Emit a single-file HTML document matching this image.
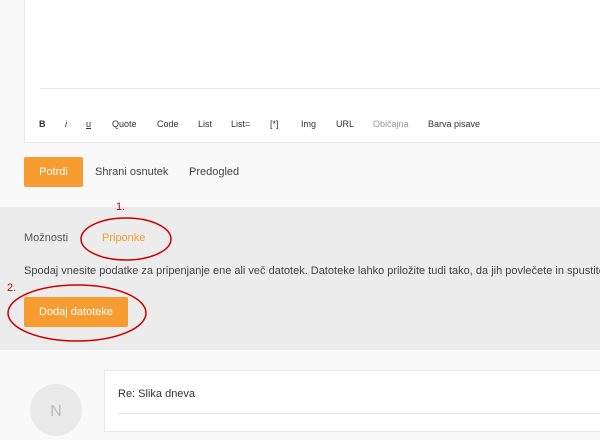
<!DOCTYPE html>
<html><head><meta charset="utf-8"><style>
body{margin:0;width:600px;height:417px;overflow:hidden;background:#f9f9f9;font-family:"Liberation Sans",sans-serif;position:relative}
.a{position:absolute}
.ed{left:24px;top:-2px;width:590px;height:145px;background:#fff;border:1px solid #e8e8e8;box-sizing:border-box}
.ta{left:40px;top:-2px;width:570px;height:90px;border-bottom:1px solid #e6e6e6}
.tb{top:119px;font-size:9px;color:#333}
.btn{background:#f79c31;color:#fff;font-size:11px;border-radius:2px;text-align:center}
.grey{left:0;top:207px;width:600px;height:143px;background:#ececec}
.card{left:104px;top:370px;width:500px;height:60px;background:#fff;border:1px solid #e8e8e8}
</style></head><body>
<div class="a ed"></div>
<div class="a ta"></div>
<div class="a tb" style="left:39px;font-weight:bold">B</div>
<div class="a tb" style="left:65px;font-style:italic">i</div>
<div class="a tb" style="left:86px;text-decoration:underline">u</div>
<div class="a tb" style="left:112px">Quote</div>
<div class="a tb" style="left:157px">Code</div>
<div class="a tb" style="left:198px">List</div>
<div class="a tb" style="left:231px">List=</div>
<div class="a tb" style="left:270px">[*]</div>
<div class="a tb" style="left:301px">Img</div>
<div class="a tb" style="left:336px">URL</div>
<div class="a tb" style="left:373px;color:#999">Običajna</div>
<div class="a tb" style="left:428px">Barva pisave</div>
<div class="a btn" style="left:24px;top:157px;width:59px;height:30px;line-height:30px">Potrdi</div>
<div class="a" style="left:95px;top:166px;font-size:11px;color:#444">Shrani osnutek</div>
<div class="a" style="left:189px;top:166px;font-size:11px;color:#444">Predogled</div>
<div class="a grey"></div>
<div class="a" style="left:24px;top:232px;font-size:11px;color:#555">Možnosti</div>
<div class="a" style="left:102px;top:232px;font-size:11px;color:#f79c31">Priponke</div>
<div class="a" style="left:24px;top:265px;font-size:11px;color:#444;white-space:nowrap">Spodaj vnesite podatke za pripenjanje ene ali več datotek. Datoteke lahko priložite tudi tako, da jih povlečete in spustite</div>
<div class="a btn" style="left:24px;top:297px;width:104px;height:30px;line-height:30px">Dodaj datoteke</div>
<div class="a" style="left:116px;top:201px;font-size:11px;color:#c00">1.</div>
<div class="a" style="left:7px;top:282px;font-size:11px;color:#c00">2.</div>
<svg class="a" style="left:0;top:0" width="600" height="417">
<ellipse cx="126" cy="239" rx="45" ry="21" fill="none" stroke="#c00" stroke-width="1.5"/>
<ellipse cx="77" cy="313" rx="69" ry="28" fill="none" stroke="#c00" stroke-width="1.5"/>
</svg>
<div class="a card"></div>
<div class="a" style="left:118px;top:388px;font-size:11px;color:#333">Re: Slika dneva</div>
<div class="a" style="left:118px;top:413px;width:490px;height:1px;background:#e6e6e6"></div>
<div class="a" style="left:30px;top:384px;width:52px;height:52px;border-radius:50%;background:#eaeaea;color:#bbb;font-size:16px;text-align:center;line-height:56px">N</div>
</body></html>
